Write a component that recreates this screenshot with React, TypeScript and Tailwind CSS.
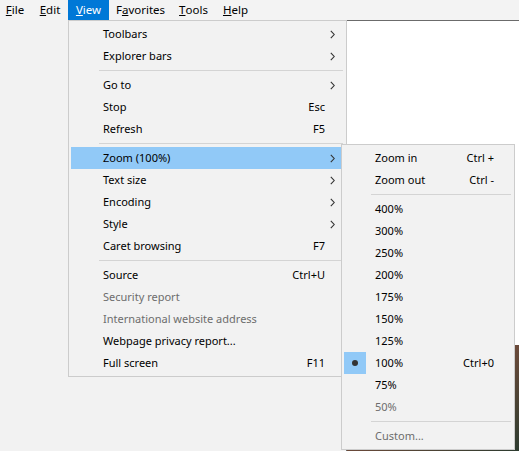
import React from "react";

type Item =
  | { sep: true }
  | {
      sep?: false;
      label: string;
      shortcut?: string;
      sub?: boolean;
      disabled?: boolean;
      active?: boolean;
      checked?: boolean;
    };

const viewItems: Item[] = [
  { label: "Toolbars", sub: true },
  { label: "Explorer bars", sub: true },
  { sep: true },
  { label: "Go to", sub: true },
  { label: "Stop", shortcut: "Esc" },
  { label: "Refresh", shortcut: "F5" },
  { sep: true },
  { label: "Zoom (100%)", sub: true, active: true },
  { label: "Text size", sub: true },
  { label: "Encoding", sub: true },
  { label: "Style", sub: true },
  { label: "Caret browsing", shortcut: "F7" },
  { sep: true },
  { label: "Source", shortcut: "Ctrl+U" },
  { label: "Security report", disabled: true },
  { label: "International website address", disabled: true },
  { label: "Webpage privacy report..." },
  { label: "Full screen", shortcut: "F11" },
];

const zoomItems: Item[] = [
  { label: "Zoom in", shortcut: "Ctrl +" },
  { label: "Zoom out", shortcut: "Ctrl -" },
  { sep: true },
  { label: "400%" },
  { label: "300%" },
  { label: "250%" },
  { label: "200%" },
  { label: "175%" },
  { label: "150%" },
  { label: "125%" },
  { label: "100%", shortcut: "Ctrl+0", checked: true },
  { label: "75%" },
  { label: "50%", disabled: true },
  { sep: true },
  { label: "Custom...", disabled: true },
];

const Chevron = () => (
  <svg width="5" height="9" viewBox="0 0 5 9" fill="none">
    <path d="M0.8 0.8 L4.2 4.5 L0.8 8.2" stroke="#333333" strokeWidth="1.1" />
  </svg>
);

const MenuList = ({ items, gutter, sepLeft, right }: { items: Item[]; gutter: string; sepLeft: string; right: string }) => (
  <div className="flex flex-col">
    {items.map((it, i) =>
      it.sep ? (
        <div key={i} className="h-[7px] flex items-center">
          <div className={`h-px flex-1 bg-[#d4d4d4] mr-px ${sepLeft}`} />
        </div>
      ) : (
        <div
          key={i}
          className={`h-[22px] flex items-center ${it.active ? "bg-[#91c9f7]" : ""} ${
            it.disabled ? "text-[#6d6d6d]" : "text-black"
          }`}
        >
          <div className={`${gutter} h-full shrink-0 flex`}>
            {it.checked && (
              <div className="w-[22px] h-full bg-[#91c9f7] flex items-center justify-center">
                <div className="w-[6px] h-[6px] rounded-full bg-[#333333]" />
              </div>
            )}
          </div>
          <span className="flex-1 whitespace-nowrap pt-px">{it.label}</span>
          {it.shortcut && <span className="whitespace-pre pt-px">{it.shortcut}</span>}
          <div className={`${right} h-full shrink-0 flex items-center pl-[5px]`}>{it.sub && <Chevron />}</div>
        </div>
      )
    )}
  </div>
);

// menu bar entries, widths taken from the screenshot
const bar = [
  { pre: "", key: "F", post: "ile", w: "w-[34px]" },
  { pre: "", key: "E", post: "dit", w: "w-[36px]" },
  { pre: "", key: "V", post: "iew", w: "w-[41px]", open: true },
  { pre: "F", key: "a", post: "vorites", w: "w-[63px]" },
  { pre: "", key: "T", post: "ools", w: "w-[43px]" },
  { pre: "", key: "H", post: "elp", w: "w-[41px]" },
];

export default function App() {
  return (
    <div
      className="relative w-[519px] h-[451px] overflow-hidden bg-[#f2f2f2] text-[11px] flex flex-col"
      style={{ fontFamily: '"Noto Sans", sans-serif' }}
    >
      <div className="h-5 flex shrink-0 -ml-0.5 bg-[#f3f3f3] text-[11.5px]">
        {bar.map((b) => (
          <div
            key={b.post}
            className={`${b.w} h-full flex items-center justify-center ${
              b.open ? "bg-[#0078d7] text-white" : "text-black"
            }`}
          >
            {b.pre}
            <span className="underline underline-offset-[1px]">{b.key}</span>
            {b.post}
          </div>
        ))}
      </div>

      <div className="flex-1 flex">
        <div className="flex-1" />
        <div className="w-[173px] flex flex-col border-t border-l border-[#6b6b6b]">
          <div className="flex-1 bg-white" />
          <div className="h-[106px] bg-gradient-to-br from-[#3a3f52] via-[#6b4a3a] to-[#2c3b2f]" />
        </div>
      </div>

      <div className="absolute left-[68px] top-[20px] w-[279px] border border-[#cccccc] bg-[#f2f2f2] p-[2px]">
        <MenuList items={viewItems} gutter="w-[32px]" sepLeft="ml-[28px]" right="w-[19px]" />
      </div>

      <div className="absolute left-[341px] top-[144px] w-[174px] border border-[#cccccc] bg-[#f2f2f2] p-[2px]">
        <MenuList items={zoomItems} gutter="w-[31px]" sepLeft="ml-[27px]" right="w-[18px]" />
      </div>
    </div>
  );
}
